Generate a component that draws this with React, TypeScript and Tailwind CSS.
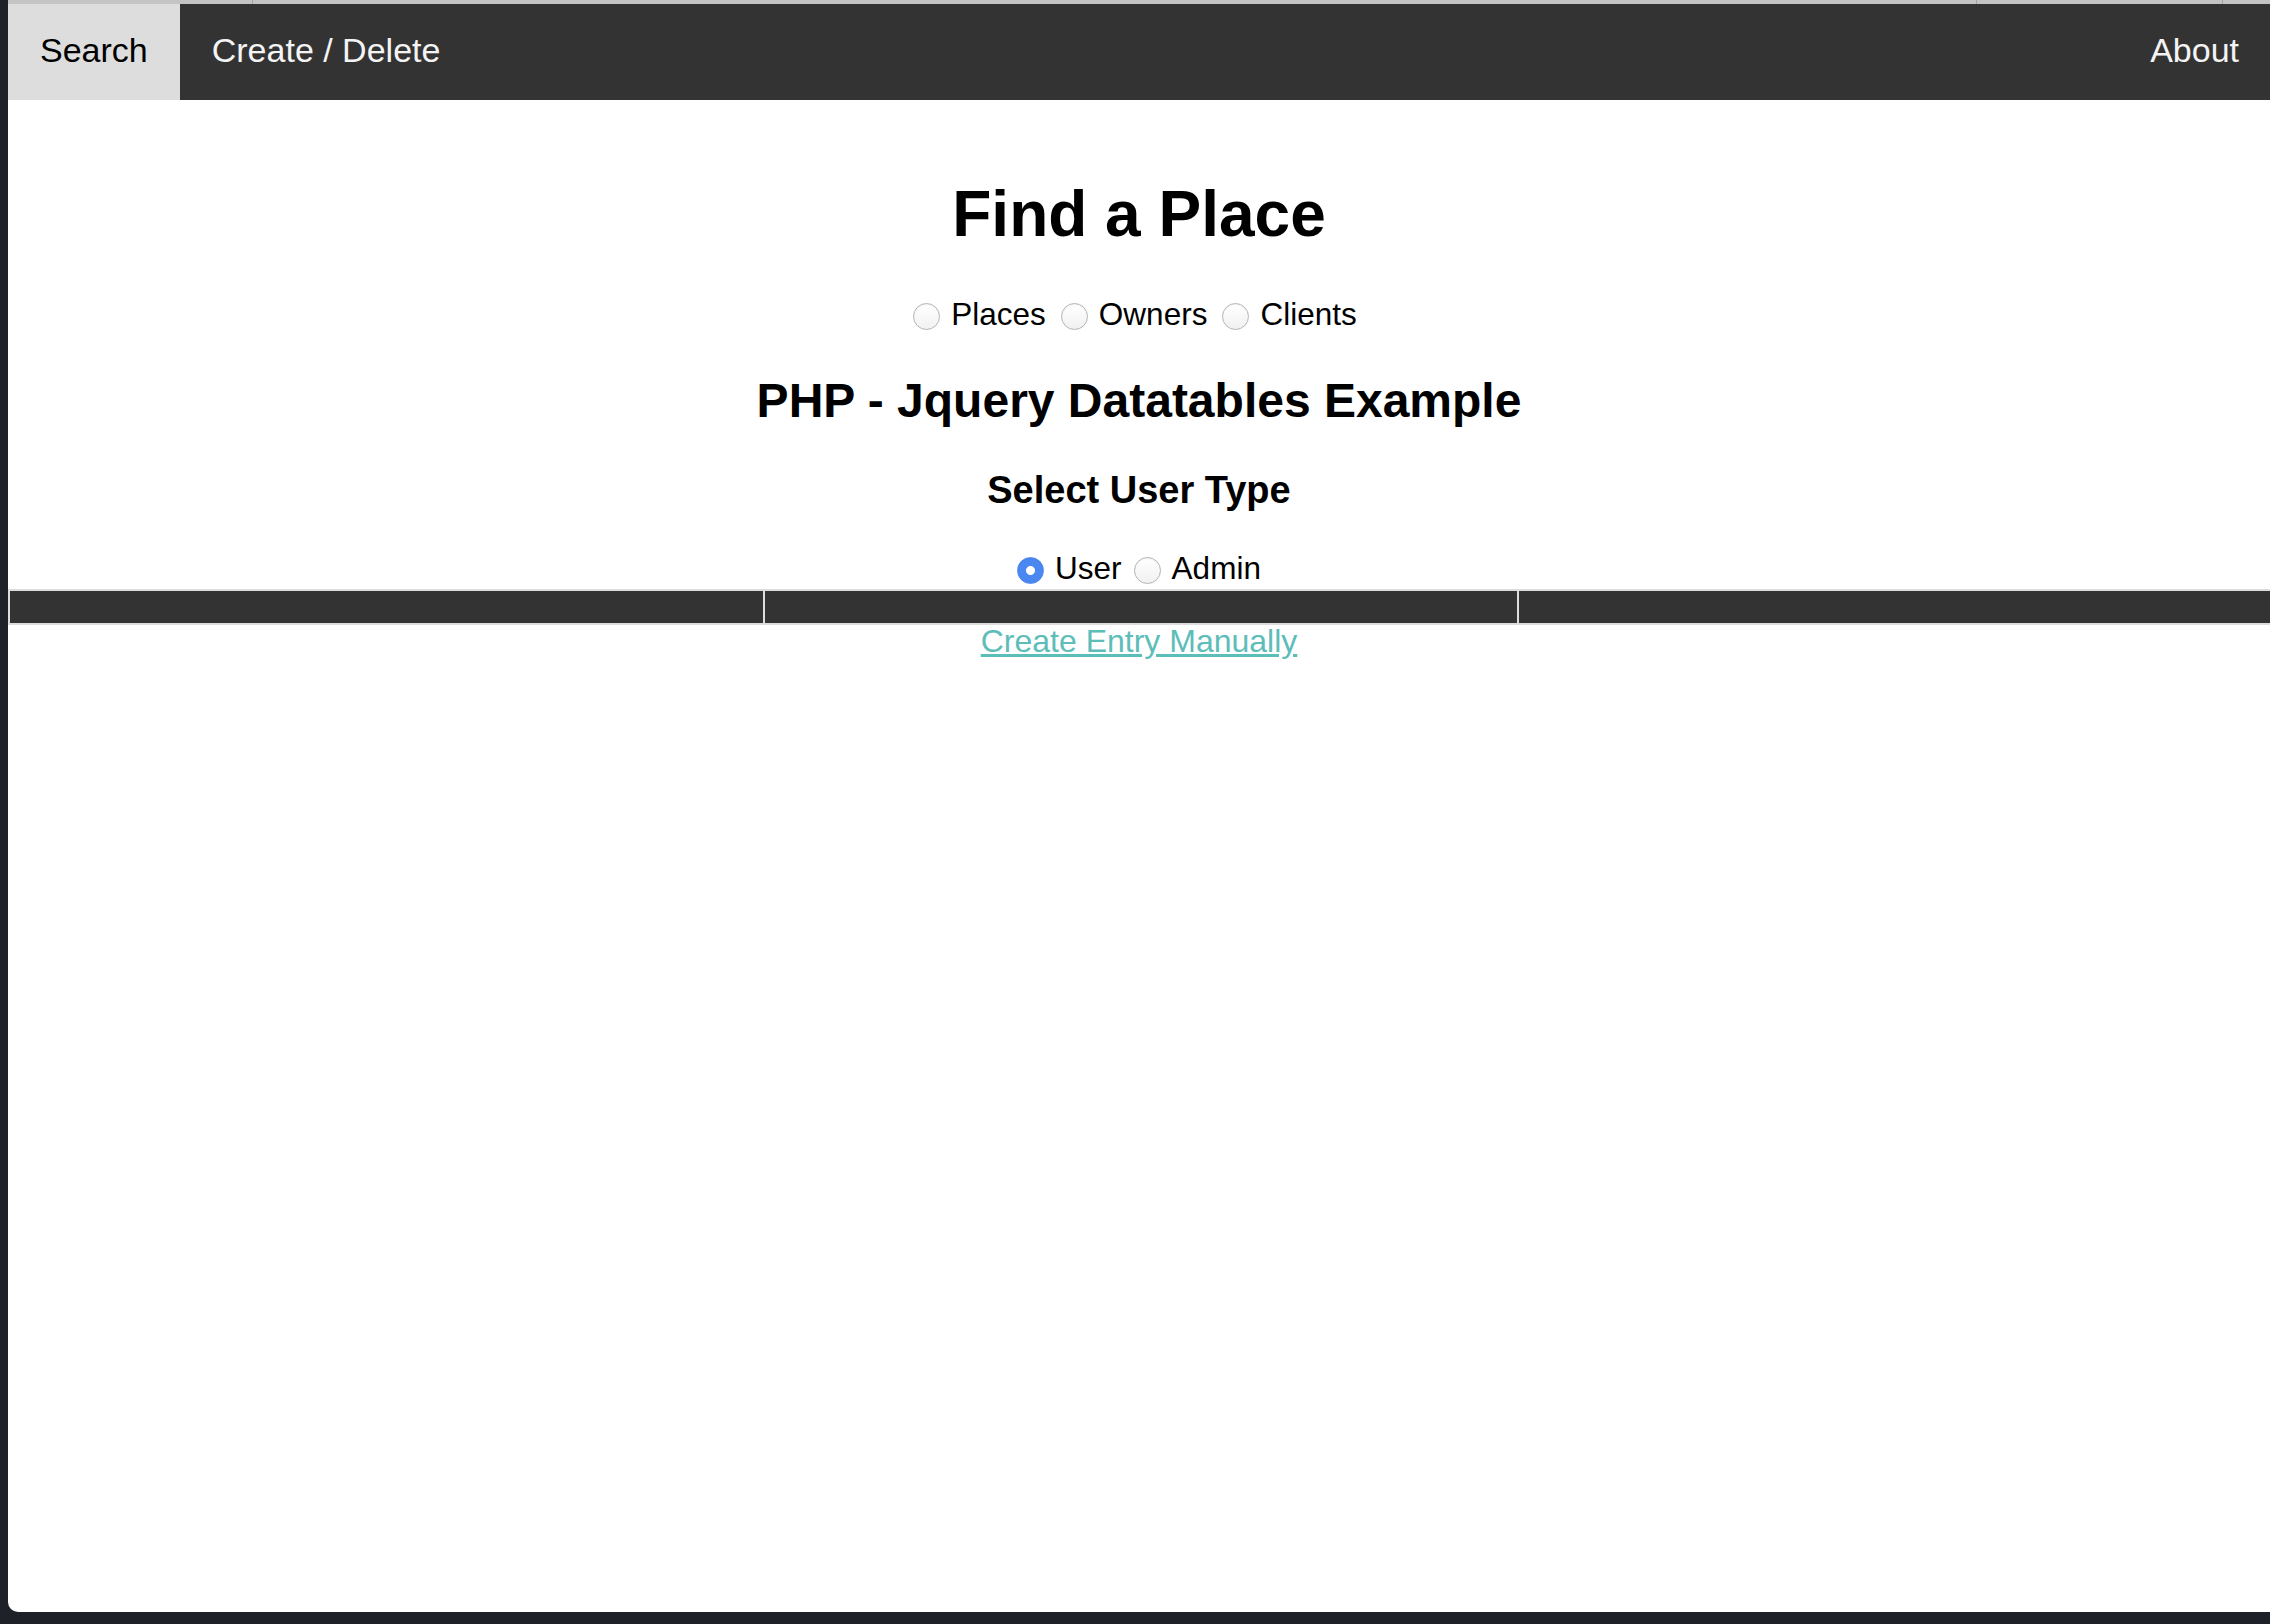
import React from "react";

const font = { fontFamily: '"Liberation Sans", Arial, sans-serif' };

interface RadioProps {
  label: string;
  name: string;
  checked?: boolean;
}

const Radio: React.FC<RadioProps> = ({ label, name, checked = false }) => (
  <label className="flex items-center">
    <input
      type="radio"
      name={name}
      defaultChecked={checked}
      className="appearance-none w-[27px] h-[27px] mt-[5px] rounded-full border border-[#b4b4b4] bg-[linear-gradient(#ffffff,#f1f1f1)] shadow-[inset_0_1px_1px_rgba(0,0,0,0.05)] checked:border-[#4b87f1] checked:bg-[radial-gradient(circle,#ffffff_0_4px,#4b87f1_5px)]"
    />
    <span className="ml-[11px]">{label}</span>
  </label>
);

export default function App() {
  return (
    <div className="min-h-screen bg-[#1f2128] pl-[8px]" style={font}>
      <div className="h-[1612px] bg-white rounded-bl-[10px] overflow-hidden flex flex-col">
        <div className="flex h-[4px] bg-[#c4c4c4]">
          <div className="w-[245px] border-r border-[#a3a3a3]"></div>
          <div className="flex-1 border-r border-[#a3a3a3]"></div>
          <div className="w-[246px] border-r border-[#a3a3a3]"></div>
          <div className="w-[47px]"></div>
        </div>

        <nav className="flex h-[96px] bg-[#333333] text-[34px] text-[#f4f4f4]">
          <a className="flex items-center px-[32px] pb-[3px] bg-[#dddddd] text-black">Search</a>
          <a className="flex items-center px-[32px] pb-[3px]">Create / Delete</a>
          <a className="flex items-center px-[31px] pb-[3px] ml-auto">About</a>
        </nav>

        <div className="flex flex-col items-center text-black">
          <h1 className="mt-[77px] text-[64px] leading-[74px] font-bold">Find a Place</h1>

          <div className="mt-[45px] pr-[8px] flex items-center gap-[15px] text-[31.5px] leading-[36px]">
            <Radio name="search" label="Places" />
            <Radio name="search" label="Owners" />
            <Radio name="search" label="Clients" />
          </div>

          <h2 className="mt-[41px] text-[48px] leading-[56px] font-bold">
            PHP - Jquery Datatables Example
          </h2>

          <h3 className="mt-[39px] text-[38px] leading-[44px] font-bold">Select User Type</h3>

          <div className="mt-[38px] flex items-center gap-[12px] text-[31.5px] leading-[36px]">
            <Radio name="usertype" label="User" checked />
            <Radio name="usertype" label="Admin" />
          </div>
        </div>

        <div className="mt-[3px] mr-[-4px] grid grid-cols-3 gap-[2px] p-[2px] bg-[#dddddd]">
          <div className="h-[32px] bg-[#333333]"></div>
          <div className="h-[32px] bg-[#333333]"></div>
          <div className="h-[32px] bg-[#333333]"></div>
        </div>

        <div className="text-center">
          <a className="text-[32px] leading-[32px] text-[#5cbdb9] underline">Create Entry Manually</a>
        </div>
      </div>
    </div>
  );
}
